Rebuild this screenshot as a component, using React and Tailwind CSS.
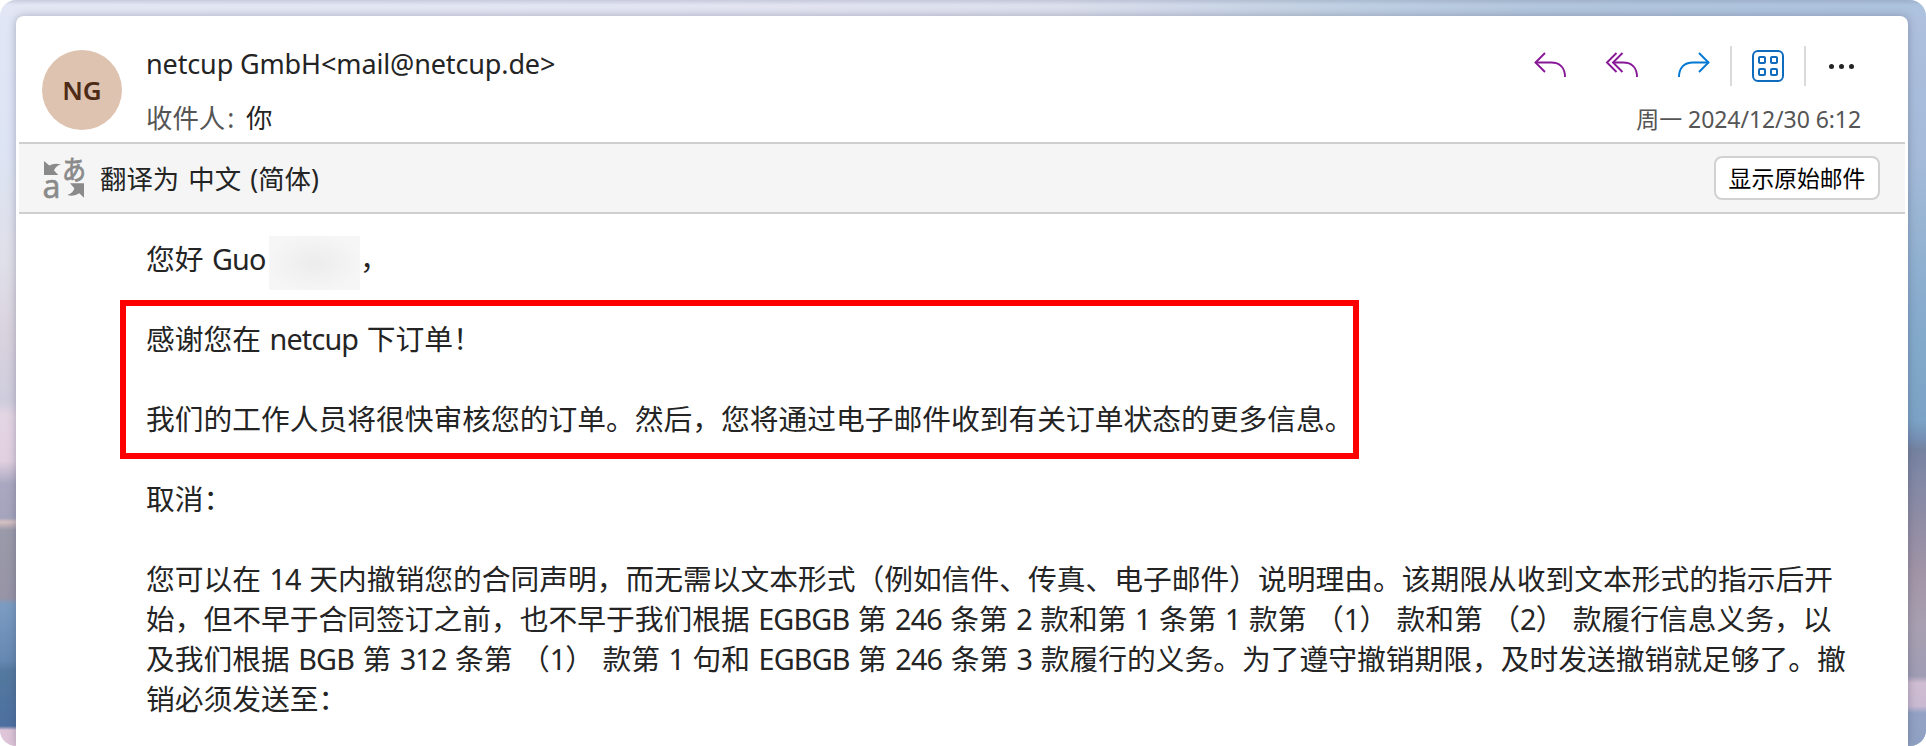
import React from "react";

const LATIN = "tracking-[-0.028em]";

// Latin words and digits, set a little tighter than the Chinese text
function En({ children }) {
  return <span className={LATIN}>{children}</span>;
}

function ReplyIcon() {
  return (
    <svg width="34" height="28" viewBox="0 0 34 28" fill="none" stroke="#881798" strokeWidth="1.9">
      <path d="M12 2 L2.5 11.5 L12 21" />
      <path d="M2.5 11.5 H18 C27 11.5 32 17 32 26" />
    </svg>
  );
}

function ReplyAllIcon() {
  return (
    <svg width="34" height="28" viewBox="0 0 34 28" fill="none" stroke="#881798" strokeWidth="1.9">
      <path d="M11.5 2 L2 11.5 L11.5 21" />
      <path d="M17.500 2 L8 11.5 L17.500 21" />
      <path d="M8 11.5 H18 C27 11.5 32 17 32 26" />
    </svg>
  );
}

function ForwardIcon() {
  return (
    <svg width="34" height="28" viewBox="0 0 34 28" fill="none" stroke="#0078d4" strokeWidth="1.9">
      <path d="M22 2 L31.5 11.5 L22 21" />
      <path d="M31.5 11.5 H16 C7 11.5 2 17 2 26" />
    </svg>
  );
}

function AppsIcon() {
  return (
    <svg width="34" height="34" viewBox="0 0 34 34" fill="none" stroke="#0f6cbd" strokeWidth="2">
      <rect x="2" y="2" width="30" height="30" rx="5" />
      <rect x="8" y="8" width="6" height="6" rx="1" />
      <rect x="20" y="8" width="6" height="6" rx="1" />
      <rect x="8" y="20" width="6" height="6" rx="1" />
      <rect x="20" y="20" width="6" height="6" rx="1" />
    </svg>
  );
}

function TranslateIcon() {
  return (
    <svg className="overflow-visible" width="42" height="46" viewBox="0 0 42 46" fill="#8a8a8a">
      <path d="M0 6 L5.300 10.500 Q10 7.500 17 9.300 Q11.500 11 10 15.500 L14.300 20 H0 Z" />
      <path d="M40 42.700 L35.300 38.300 Q30 42 23.300 40 Q29.500 38 30.300 33.300 L26 28.300 H40 Z" />
      <text x="-1.500" y="43" fontSize="32" fontFamily="Noto Sans" textLength="18" lengthAdjust="spacingAndGlyphs" stroke="#8a8a8a" strokeWidth="0.500">a</text>
      <text x="18" y="24.500" fontSize="27" fontFamily="Noto Sans CJK JP" textLength="24" lengthAdjust="spacingAndGlyphs" stroke="#8a8a8a" strokeWidth="0.800">あ</text>
    </svg>
  );
}

export default function App() {
  return (
    <div className="h-[746px] w-[1926px] bg-white">
      <div className="flex h-full flex-col overflow-hidden rounded-2xl bg-[linear-gradient(90deg,#e3e7f5,#e2e4f2_40%,#dcdfed_55%,#c3d2e4_68%,#b2c6dd_80%,#adc2de)] font-['Noto_Sans','Noto_Sans_CJK_SC',sans-serif] text-[#242424]">
        <div className="h-4 shrink-0 bg-[linear-gradient(180deg,rgba(90,100,130,0.200),transparent_5px)]" />
        <div className="flex min-h-0 flex-1">
          {/* Wallpaper, left edge */}
          <div className="w-4 shrink-0 bg-[linear-gradient(180deg,#e0e6f5_0px,#dde4f4_130px,#dfdfe8_250px,#d9d2de_320px,#cfcddd_385px,#e4d5e4_400px,#e0d0e0_445px,#a9a8c0_468px,#a5a4bd_502px,#d6c1c2_506px,#9b9aaa_514px,#9694a5_582px,#7c9cc2_588px,#6588b2_645px,#54799f_655px,#4c6fa0_710px,#dfc5d8_714px,#dfc5d8_730px)]" />

          <div className="z-10 flex w-[1892px] shrink-0 flex-col rounded-t-lg bg-white shadow-[0_0_8px_rgba(60,60,90,0.350)]">
            {/* Header */}
            <div className="flex h-[126px] shrink-0 pl-[26px]">
              <div className="mt-[34px] flex size-20 items-center justify-center rounded-full bg-[#dfc3b1] text-[26px] font-semibold text-[#4e2b16]">
                NG
              </div>
              <div className="ml-6 flex-1 pt-[28px]">
                <div className="h-10 whitespace-nowrap text-[27px] leading-10 tracking-[-0.005em]">netcup GmbH&lt;mail@netcup.de&gt;</div>
                <div className="mt-[14px] flex h-10 whitespace-nowrap text-[26.400px] leading-10">
                  <span className="w-[100px] text-[#555]">收件人<span className="ml-[2px]">:</span></span>
                  <span>你</span>
                </div>
              </div>
              <div className="flex w-[400px] flex-col pr-[47px]">
                <div className="mt-[30px] flex h-10 items-center justify-end">
                  <div className="mb-[2px] mr-[38px]"><ReplyIcon /></div>
                  <div className="mb-[2px] mr-[38px]"><ReplyAllIcon /></div>
                  <div className="mb-[2px] mr-[19px]"><ForwardIcon /></div>
                  <div className="h-10 w-[2px] bg-[#dadada]" />
                  <div className="mx-[19px]"><AppsIcon /></div>
                  <div className="h-10 w-[2px] bg-[#dadada]" />
                  <div className="ml-[23px] mr-[7px] flex gap-[5px]">
                    <i className="size-[5px] rounded-full bg-[#242424]" />
                    <i className="size-[5px] rounded-full bg-[#242424]" />
                    <i className="size-[5px] rounded-full bg-[#242424]" />
                  </div>
                </div>
                <div className="mt-[13px] whitespace-nowrap text-right text-[23px] leading-10 tracking-[-0.003em] text-[#555]">周一 2024/12/30 6:12</div>
              </div>
            </div>

            {/* Translation bar */}
            <div className="mx-[3px] flex h-[72px] shrink-0 items-center border-y-2 border-[#cfcfcf] bg-[#f5f5f5] pl-[25px] pr-[25px]">
              <TranslateIcon />
              <span className="ml-[14px] pt-[2px] text-[26.400px] leading-10 [word-spacing:2.3px]">翻译为 中文 (简体)</span>
              <button className="ml-auto flex h-[44px] w-[166px] items-center justify-center rounded-lg border-2 border-[#d1d1d1] bg-white pt-[2px] text-[22.800px] text-black">
                显示原始邮件
              </button>
            </div>

            {/* Message */}
            <div className="flex min-h-0 flex-1 flex-col whitespace-nowrap pl-[104px] pt-[22px] text-[28.760px] leading-10 [word-spacing:0.95px]">
              <div className="flex h-[54px] pl-[26px]">
                <p className="w-[123px] pt-[3px]">您好 <En>Guo</En></p>
                <div className="h-[54px] w-[91px] bg-[radial-gradient(ellipse_at_center,#ececec,#f6f6f6_75%)]" />
                <p className="pt-[3px]">，</p>
              </div>
              <div className="mt-[10px] h-[159px] w-[1239px] shrink-0 border-6 border-[#fe0000] pl-5 pt-[13px]">
                <p>感谢您在 <En>netcup</En> 下订单！</p>
                <p className="mt-10">我们的工作人员将很快审核您的订单。然后，您将通过电子邮件收到有关订单状态的更多信息。</p>
              </div>
              <div className="mt-[20px] pl-[26px]">
                <p>取消：</p>
                <p className="mt-10">您可以在 <En>14</En> 天内撤销您的合同声明，而无需以文本形式（例如信件、传真、电子邮件）说明理由。该期限从收到文本形式的指示后开</p>
                <p>始，但不早于合同签订之前，也不早于我们根据 <En>EGBGB</En> 第 <En>246</En> 条第 <En>2</En> 款和第 <En>1</En> 条第 <En>1</En> 款第 （<En>1</En>） 款和第 （<En>2</En>） 款履行信息义务，以</p>
                <p>及我们根据 <En>BGB</En> 第 <En>312</En> 条第 （<En>1</En>） 款第 <En>1</En> 句和 <En>EGBGB</En> 第 <En>246</En> 条第 <En>3</En> 款履行的义务。为了遵守撤销期限，及时发送撤销就足够了。撤</p>
                <p>销必须发送至：</p>
              </div>
            </div>
          </div>

          {/* Wallpaper, right edge */}
          <div className="flex-1 bg-[linear-gradient(180deg,#aec0de_0px,#a3bad8_150px,#86abcc_300px,#7ba3c5_405px,#7590b4_422px,#75829f_434px,#8088a5_460px,#8e8ca5_500px,#a295a7_560px,#a8a0b1_610px,#9f9cb4_660px,#cfbdd1_667px,#c9b9d2_690px,#92a2c4_697px,#8fa1c2_730px)]" />
        </div>
      </div>
    </div>
  );
}
